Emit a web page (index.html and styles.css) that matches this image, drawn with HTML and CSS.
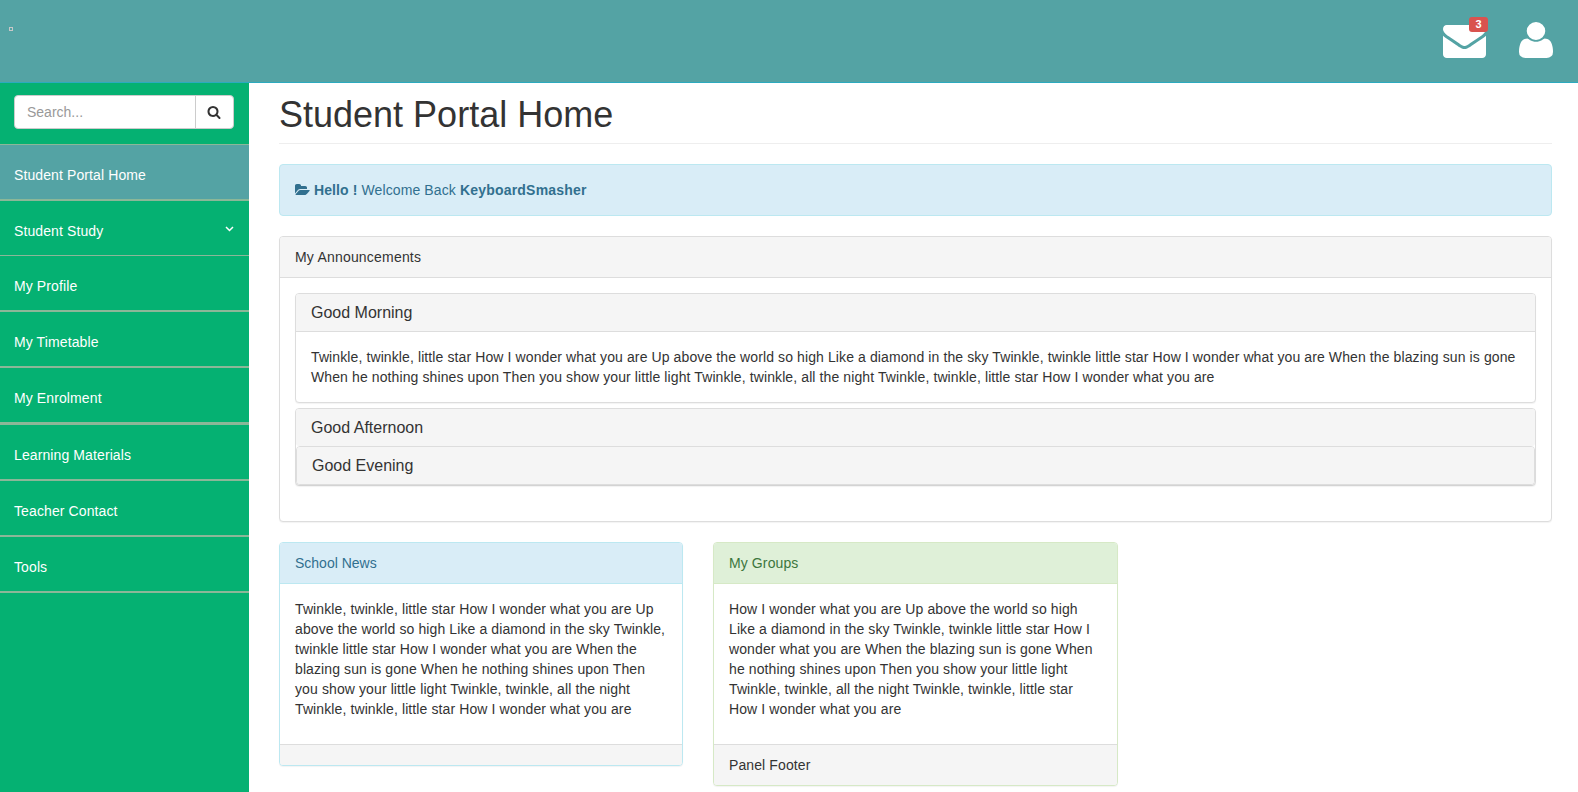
FILE: index.html
```html
<!DOCTYPE html>
<html lang="en">
<head>
<meta charset="utf-8">
<title>Student Portal Home</title>
<link rel="stylesheet" href="styles.css">
</head>
<body>
<header class="topbar">
  <span class="logo"></span>
  <nav class="top-links">
    <a class="mail">
      <svg class="icon-mail" viewBox="0 256 1792 1408" preserveAspectRatio="none"><path d="M1792 710v794q0 66-47 113t-113 47h-1472q-66 0-113-47t-47-113v-794q44 49 101 87 362 246 497 345 57 42 92.500 65.500t94.500 48 110 24.500h2q51 0 110-24.500t94.500-48 92.500-65.500q170-123 498-345 57-39 100-87zm0-294q0 79-49 151t-122 123q-376 261-468 325-10 7-42.500 31t-54 38.500-52 32.500-57.500 27-50 9h-2q-23 0-50-9t-57.500-27-52-32.500-54-38.500-42.500-31q-91-64-262-182.500t-205-142.500q-62-42-117-115.500t-55-136.500q0-78 41.500-130t118.500-52h1472q65 0 112.500 47t47.500 113z"/></svg>
      <span class="badge">3</span>
    </a>
    <a class="user">
      <svg class="icon-user" viewBox="0 0 1408 1536" preserveAspectRatio="none"><g transform="matrix(1 0 0 -1 0 1408)"><path d="M1408 131q0 -120 -73 -189.500t-194 -69.500h-874q-121 0 -194 69.500t-73 189.500q0 53 3.500 103.500t14 109t26.500 108.500t43 97.500t62 81t85.500 53.500t111.500 20q9 0 42 -21.500t74.500 -48t108 -48t133.500 -21.500t133.500 21.500t108 48t74.500 48t42 21.500q61 0 111.500 -20t85.500 -53.500t62 -81t43 -97.500t26.500 -108.500t14 -109t3.500 -103.500zM1088 1024q0 -159 -112.500 -271.500t-271.500 -112.500t-271.500 112.500t-112.500 271.500t112.500 271.500t271.500 112.500t271.500 -112.500t112.500 -271.500z"/></g></svg>
    </a>
  </nav>
</header>
<div class="layout">
  <aside class="sidebar">
    <div class="search">
      <input class="search-input" type="text" placeholder="Search...">
      <button class="search-btn" type="button"><svg viewBox="0 0 1792 1792"><path d="M1216 832q0-185-131.500-316.500t-316.500-131.500-316.500 131.500-131.500 316.500 131.500 316.500 316.500 131.500 316.500-131.500 131.500-316.500zm512 832q0 52-38 90t-90 38q-54 0-90-38l-343-342q-179 124-399 124-143 0-273.500-55.500t-225-150-150-225-55.500-273.500 55.500-273.500 150-225 225-150 273.500-55.500 273.500 55.500 225 150 150 225 55.500 273.500q0 220-124 399l343 343q37 37 37 90z"/></svg></button>
    </div>
    <ul class="menu">
      <li class="menu-item active">Student Portal Home</li>
      <li class="menu-item thin">Student Study<svg class="chevron" viewBox="0 0 9 6"><path d="M1 1l3.500 3.500L8 1"/></svg></li>
      <li class="menu-item">My Profile</li>
      <li class="menu-item">My Timetable</li>
      <li class="menu-item thick">My Enrolment</li>
      <li class="menu-item">Learning Materials</li>
      <li class="menu-item">Teacher Contact</li>
      <li class="menu-item">Tools</li>
    </ul>
  </aside>
  <main class="content">
    <h1 class="page-title">Student Portal Home</h1>
    <div class="alert"><svg class="icon-folder" viewBox="0 0 1920 1792"><path d="M1879 952q0 31-31 66l-336 396q-43 51-120.500 86.500t-143.500 35.500h-1088q-34 0-60.500-13t-26.500-43q0-31 31-66l336-396q43-51 120.500-86.500t143.500-35.500h1088q34 0 60.500 13t26.500 43zm-343-344v160h-832q-94 0-197 47.500t-164 119.500l-337 396-5 6q0-4-.5-12.500t-.5-12.500v-960q0-92 66-158t158-66h320q92 0 158 66t66 158v32h544q92 0 158 66t66 158z"/></svg> <b class="hello">Hello !</b> <span class="welcome">Welcome Back</span> <b class="name">KeyboardSmasher</b></div>
    <section class="panel announcements">
      <div class="panel-heading">My Announcements</div>
      <div class="panel-body">
        <div class="panel">
          <h4 class="item-heading">Good Morning</h4>
          <div class="item-body">Twinkle, twinkle, little star How I wonder what you are Up above the world so high Like a diamond in the sky Twinkle, twinkle little star How I wonder what you are When the blazing sun is gone<br>When he nothing shines upon Then you show your little light Twinkle, twinkle, all the night Twinkle, twinkle, little star How I wonder what you are</div>
        </div>
        <div class="panel stacked">
          <h4 class="item-heading bare">Good Afternoon</h4>
          <div class="panel">
            <h4 class="item-heading bare">Good Evening</h4>
          </div>
        </div>
      </div>
    </section>
    <div class="cards">
      <section class="panel info">
        <div class="panel-heading">School News</div>
        <div class="panel-body"><p>Twinkle, twinkle, little star How I wonder what you are Up<br>above the world so high Like a diamond in the sky Twinkle,<br>twinkle little star How I wonder what you are When the<br>blazing sun is gone When he nothing shines upon Then<br>you show your little light Twinkle, twinkle, all the night<br>Twinkle, twinkle, little star How I wonder what you are</p></div>
        <div class="panel-footer"></div>
      </section>
      <section class="panel success">
        <div class="panel-heading">My Groups</div>
        <div class="panel-body"><p>How I wonder what you are Up above the world so high<br>Like a diamond in the sky Twinkle, twinkle little star How I<br>wonder what you are When the blazing sun is gone When<br>he nothing shines upon Then you show your little light<br>Twinkle, twinkle, all the night Twinkle, twinkle, little star<br>How I wonder what you are</p></div>
        <div class="panel-footer">Panel Footer</div>
      </section>
    </div>
  </main>
</div>
</body>
</html>
```
FILE: styles.css
```css
* { box-sizing: border-box; }
body {
  margin: 0;
  height: 792px;
  overflow: hidden;
  display: flex;
  flex-direction: column;
  background: #fff;
  color: #333;
  font: 14px/20px "Liberation Sans", Arial, sans-serif;
  letter-spacing: .106px;
}
.topbar {
  flex: none;
  height: 83px;
  display: flex;
  justify-content: space-between;
  padding: 0 25.500px 0 9px;
  background: #54a3a4;
  border-bottom: 1px solid #2caabf;
}
.logo { width: 4px; height: 4px; margin-top: 27px; border: 1px solid #c8c8c8; }
.top-links { display: flex; gap: 33px; fill: #fff; }
.top-links svg { display: block; }
.mail { position: relative; padding-top: 25px; }
.icon-mail { width: 43px; height: 33px; }
.user { padding-top: 22px; }
.icon-user { width: 34px; height: 36px; }
.badge {
  position: absolute;
  left: 26.500px;
  top: 17px;
  width: 19px;
  height: 15px;
  border-radius: 3px;
  background: #d9534f;
  color: #fff;
  font-size: 11px;
  font-weight: bold;
  line-height: 15px;
  text-align: center;
}
.layout { flex: 1; display: flex; min-height: 0; }
.sidebar { flex: none; width: 249px; background: #05b172; }
.search { display: flex; height: 62px; padding: 12px 15px 16px 14px; border-bottom: 1px solid #8bb798; }
.search-input {
  width: 182px;
  height: 34px;
  padding: 6px 12px;
  border: 1px solid #ccc;
  border-radius: 4px 0 0 4px;
  background: #fff;
  font: inherit;
}
.search-input::placeholder { color: #999; opacity: 1; }
.search-btn {
  width: 39px;
  height: 34px;
  margin-left: -1px;
  padding: 0 1px 0 0;
  display: flex;
  align-items: center;
  justify-content: center;
  border: 1px solid #ccc;
  border-radius: 0 4px 4px 0;
  background: #fff;
}
.search-btn svg { width: 14px; height: 14px; fill: #333; }
.menu { margin: 0; padding: 0; list-style: none; }
.menu-item {
  display: flex;
  justify-content: space-between;
  padding: 20px 15px 14px 14px;
  border-bottom: 2px solid #8bb798;
  color: #fff;
}
.menu-item.active { background: #54a3a4; }
.menu-item.thin { border-bottom-width: 1px; }
.menu-item.thick { border-bottom-width: 3px; }
.chevron { width: 9px; height: 6px; margin-top: 5px; fill: none; stroke: #fff; stroke-width: 1.500; }
.content { flex: 1; padding: 11px 26px 0 30px; }
.page-title {
  height: 50px;
  margin: 0 0 20px;
  border-bottom: 1px solid #eee;
  font-size: 36px;
  font-weight: normal;
  line-height: 42px;
  letter-spacing: 0;
}
.alert {
  height: 52px;
  margin-bottom: 20px;
  padding: 15px;
  border: 1px solid #bce8f1;
  border-radius: 4px;
  background: #d9edf7;
  color: #31708f;
}
.name { letter-spacing: .2px; }
.icon-folder { width: 15px; height: 14px; vertical-align: -2px; fill: #31708f; }
.panel {
  border: 1px solid #ddd;
  border-radius: 4px;
  background: #fff;
  box-shadow: 0 1px 1px rgba(0, 0, 0, .05);
}
.panel-heading {
  padding: 10px 15px;
  border-bottom: 1px solid #ddd;
  border-radius: 3px 3px 0 0;
  background: #f5f5f5;
}
.panel-body { padding: 15px; }
.panel-body p { margin: 0 0 10px; }
.announcements { height: 286px; margin-bottom: 20px; }
.announcements > .panel-heading { letter-spacing: .2px; }
.item-heading {
  height: 38px;
  margin: 0;
  padding: 10px 15px;
  border-bottom: 1px solid #ddd;
  border-radius: 3px 3px 0 0;
  background: #f5f5f5;
  font-size: 16px;
  font-weight: normal;
  line-height: 18px;
  letter-spacing: 0;
}
.item-heading.bare { height: 37px; border-bottom: 0; }
.item-body { padding: 15px; white-space: nowrap; }
.stacked { margin-top: 5px; }
.stacked .item-heading { border-radius: 3px; }
.cards { display: grid; grid-template-columns: 404px 405px; gap: 30px; align-items: start; white-space: nowrap; }
.panel-footer {
  padding: 10px 15px;
  border-top: 1px solid #ddd;
  border-radius: 0 0 3px 3px;
  background: #f5f5f5;
}
.info, .info .panel-heading { border-color: #bce8f1; }
.info .panel-heading { background: #d9edf7; color: #31708f; letter-spacing: 0; }
.success, .success .panel-heading { border-color: #d6e9c6; }
.success .panel-heading { background: #dff0d8; color: #3c763d; }
```
